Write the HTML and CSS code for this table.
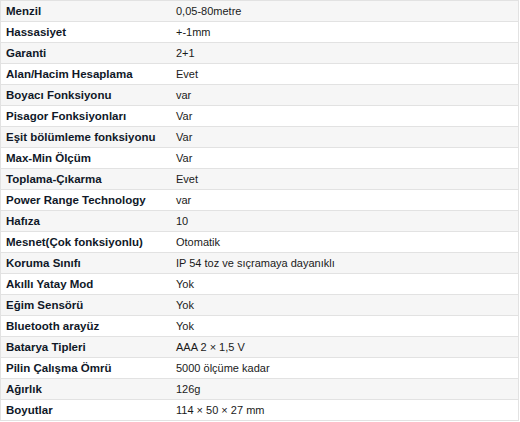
FILE: index.html
```html
<!DOCTYPE html>
<html lang="tr">
<head>
<meta charset="utf-8">
<link rel="stylesheet" href="styles.css">
</head>
<body>
<table class="specs">
<tbody>
<tr><th>Menzil</th><td>0,05-80metre</td></tr>
<tr><th>Hassasiyet</th><td>+-1mm</td></tr>
<tr><th>Garanti</th><td>2+1</td></tr>
<tr><th>Alan/Hacim Hesaplama</th><td>Evet</td></tr>
<tr><th>Boyacı Fonksiyonu</th><td>var</td></tr>
<tr><th>Pisagor Fonksiyonları</th><td>Var</td></tr>
<tr><th>Eşit bölümleme fonksiyonu</th><td>Var</td></tr>
<tr><th>Max-Min Ölçüm</th><td>Var</td></tr>
<tr><th>Toplama-Çıkarma</th><td>Evet</td></tr>
<tr><th>Power Range Technology</th><td>var</td></tr>
<tr><th>Hafıza</th><td>10</td></tr>
<tr><th>Mesnet(Çok fonksiyonlu)</th><td>Otomatik</td></tr>
<tr><th>Koruma Sınıfı</th><td>IP 54 toz ve sıçramaya dayanıklı</td></tr>
<tr><th>Akıllı Yatay Mod</th><td>Yok</td></tr>
<tr><th>Eğim Sensörü</th><td>Yok</td></tr>
<tr><th>Bluetooth arayüz</th><td>Yok</td></tr>
<tr><th>Batarya Tipleri</th><td>AAA 2 × 1,5 V</td></tr>
<tr><th>Pilin Çalışma Ömrü</th><td>5000 ölçüme kadar</td></tr>
<tr><th>Ağırlık</th><td>126g</td></tr>
<tr><th>Boyutlar</th><td>114 × 50 × 27 mm</td></tr>
</tbody>
</table>
</body>
</html>
```
FILE: styles.css
```css
html, body {
  margin: 0;
  padding: 0;
  background: #ffffff;
}
.specs {
  border-collapse: collapse;
  width: 519px;
  table-layout: fixed;
  font-family: "Liberation Sans", Arial, sans-serif;
  font-size: 11px;
}
.specs tr:nth-child(odd) {
  background: #f6f6f6;
}
.specs tr:nth-child(even) {
  background: #ffffff;
}
.specs th,
.specs td {
  height: 20px;
  padding: 0 0 0 5px;
  border-top: 1px solid #e2e2e2;
  border-bottom: 1px solid #e2e2e2;
  text-align: left;
  vertical-align: middle;
  white-space: nowrap;
  box-sizing: content-box;
}
.specs th {
  width: 165px;
  font-weight: bold;
  font-size: 11.5px;
  color: #101828;
  border-left: 1px solid #e2e2e2;
}
.specs td {
  color: #1a1a1a;
  border-right: 1px solid #e2e2e2;
}
```
